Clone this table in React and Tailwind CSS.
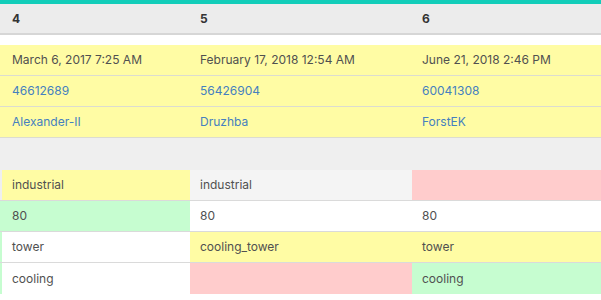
const cols = "grid grid-cols-[190px_222px_1fr]";

function TopRow({ cells, link }) {
  return (
    <div className={`${cols} h-[31px] border-b border-[#dcdcd0] bg-[#fffca4]`}>
      {cells.map((c, i) => (
        <div
          key={i}
          className={`flex items-center ${i === 0 ? "pl-3" : "pl-[10px]"} ${link ? "text-[#4580bf]" : "text-[#505050]"}`}
        >
          {c}
        </div>
      ))}
    </div>
  );
}

const tagColors = {
  y: "bg-[#fffca4]",
  g: "bg-[#c6fdd0]",
  r: "bg-[#ffcccc]",
  l: "bg-[#f4f4f4]",
  w: "bg-white",
};

function TagRow({ cells, edge, last }) {
  return (
    <div className={`${cols} h-[31px] ${last ? "" : "border-b border-[#dadada]"}`}>
      {cells.map(([text, c], i) => (
        <div
          key={i}
          className={`flex items-center pl-[10px] text-[#505050] ${tagColors[c]} ${i === 0 ? `border-l-2 ${edge}` : ""}`}
        >
          {text}
        </div>
      ))}
    </div>
  );
}

export default function App() {
  return (
    <div className="w-[601px] h-[300px] bg-white border-t-4 border-[#12cdb9] text-[12px] font-['Inter',sans-serif] overflow-hidden">
      <div className={`${cols} h-[31px] bg-[#ececec] border-b-2 border-[#d6d6d6] font-bold text-[#333]`}>
        <div className="flex items-center pl-3">4</div>
        <div className="flex items-center pl-[10px]">5</div>
        <div className="flex items-center pl-[10px]">6</div>
      </div>
      <div className="h-[10px]" />
      <TopRow cells={["March 6, 2017 7:25 AM", "February 17, 2018 12:54 AM", "June 21, 2018 2:46 PM"]} />
      <TopRow link cells={["46612689", "56426904", "60041308"]} />
      <TopRow link cells={["Alexander-II", "Druzhba", "ForstEK"]} />
      <div className="h-[32px] bg-[#efefef]" />
      <TagRow edge="border-[#efefef]" cells={[["industrial", "y"], ["industrial", "l"], ["", "r"]]} />
      <TagRow edge="border-[#c6fdd0]" cells={[["80", "g"], ["80", "w"], ["80", "w"]]} />
      <TagRow edge="border-[#c6fdd0]" cells={[["tower", "w"], ["cooling_tower", "y"], ["tower", "y"]]} />
      <TagRow last edge="border-[#c6fdd0]" cells={[["cooling", "w"], ["", "r"], ["cooling", "g"]]} />
    </div>
  );
}
